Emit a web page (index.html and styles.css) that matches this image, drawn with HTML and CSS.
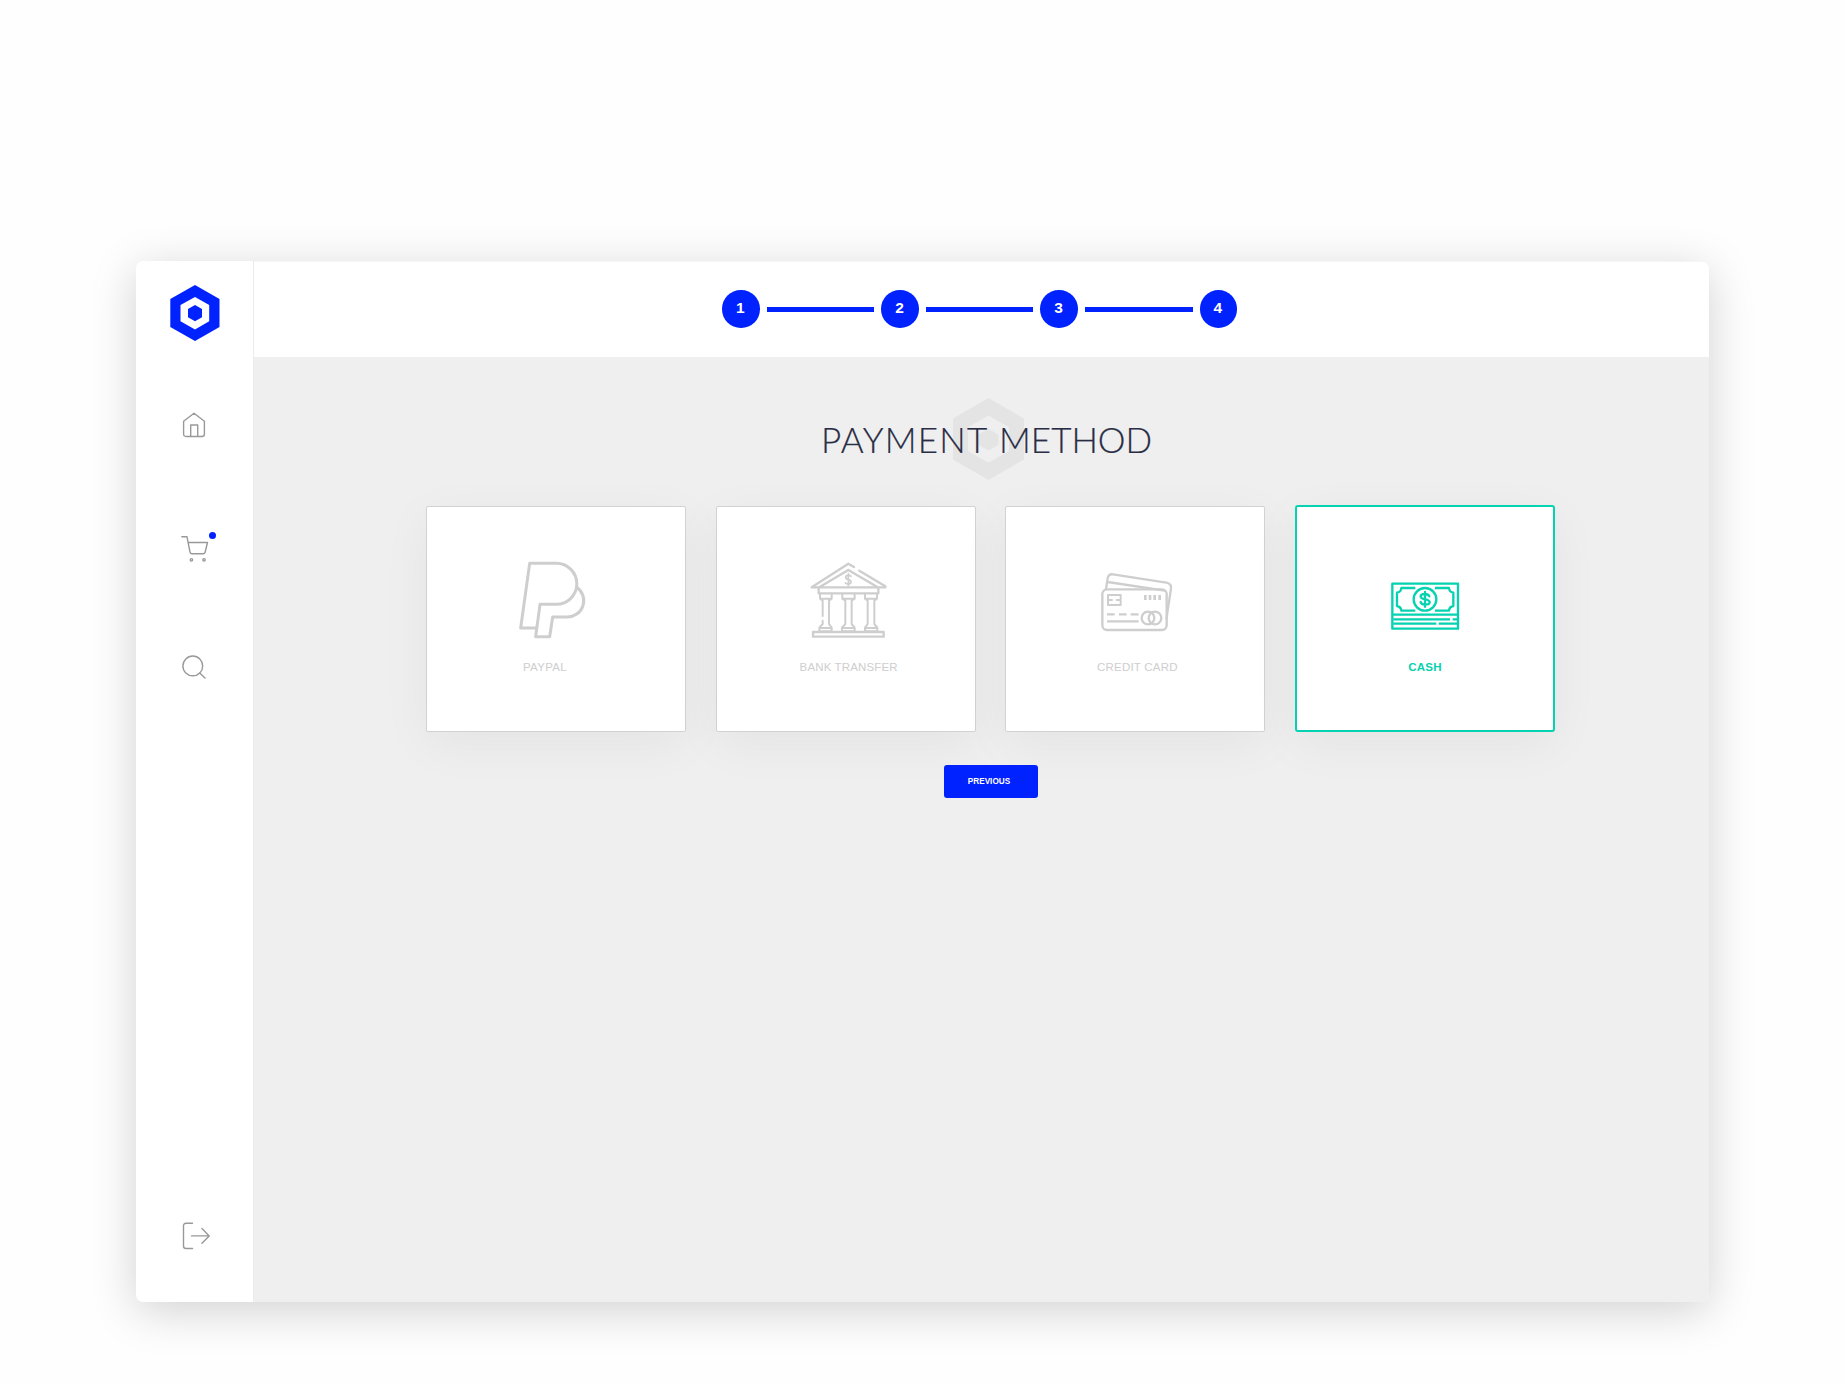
FILE: index.html
```html
<!DOCTYPE html>
<html lang="en">
<head>
<meta charset="utf-8">
<title>Payment method</title>
<link rel="stylesheet" href="styles.css">
</head>
<body>
<div class="window">
  <nav class="sidebar">
    <svg class="logo" viewBox="0 0 50 56"><path fill="#0022ff" fill-rule="evenodd" d="M25 0 49.500 14V42L25 56 .3 42V14ZM25 12 10.500 20V36.200L25 44.400 39.200 36.200V20Z"/><path fill="#0022ff" d="M25 20 32 24V32.200L25 36.200 18 32.200V24Z"/></svg>
    <svg class="nav-icon home" viewBox="0 0 24 26"><path d="M1.600 9.200 12 1.200 22.400 9.200V22Q22.400 24.500 19.900 24.500H4.100Q1.600 24.500 1.600 22ZM8.700 24.500V13H15.700V24.500"/></svg>
    <div class="cart">
      <svg class="nav-icon cart-icon" viewBox="0 0 28 27"><path d="M.8 1.800H6L9 17Q9.400 18.800 11 18.800H22Q23.800 18.800 24.200 17L26.500 7.500H7.300"/><circle cx="10.400" cy="24.800" r="1.200"/><circle cx="23" cy="24.800" r="1.200"/></svg>
      <span class="dot"></span>
    </div>
    <svg class="nav-icon search" viewBox="0 0 24 24"><circle cx="10.800" cy="10.900" r="9.900"/><path d="M17.700 18 23 23"/></svg>
    <svg class="nav-icon logout" viewBox="0 0 28 28"><path d="M10.500 1.300H4Q1.500 1.300 1.500 3.800V24Q1.500 26.500 4 26.500H10.500M9.500 13.900H27M20 6.500 27.200 13.900 20 21.300"/></svg>
  </nav>
  <div class="main">
    <header class="steps">
      <span class="step">1</span><span class="line"></span><span class="step">2</span><span class="line"></span><span class="step">3</span><span class="line"></span><span class="step">4</span>
    </header>
    <main class="content">
      <div class="heading">
        <svg class="mark" viewBox="0 0 71 82"><path fill="#e4e4e4" fill-rule="evenodd" d="M35.500 0 71 20.500V61.500L35.500 82 0 61.500V20.500ZM35.500 17.500 15 29.200V53L35.500 64.800 56 53V29.200Z"/><path fill="#e4e4e4" d="M35.500 31 45.500 36.500V47L35.500 52.500 25.500 47V36.500Z"/></svg>
        <h1><span class="wide">PAYMENT</span> <span class="tight">METHOD</span></h1>
      </div>
      <div class="cards">
        <div class="card">
          <svg class="method" viewBox="305 195 270 270"><path stroke-width="9" d="M361 220H441A61 61 0 0 1 441 343H392L379 440H421L430 381H472A49 49 0 0 0 501 291M382 414H334L361 220"/></svg>
          <span class="label paypal">PAYPAL</span>
        </div>
        <div class="card">
          <svg class="method" viewBox="62 45 270 270"><path stroke-width="7" d="M224 81 207 71 97 142H318V139L240 92M121 141 207 90 294 141M118 145V160H297V145M101 276H313V290H101Z"/>
            <path stroke-width="6" d="M122 162V176L130 182V228M130 242V252L120 263V274H157V263L149 252V182L157 176V162M122 176H157M120 264H157M189 162V176L198 182V252L188 263V274H226V263L217 252V182L226 176V162M189 176H226M188 264H226M257 162V176L265 182V252L257 263V274H294V263L285 252V182L293 176V162M257 176H293M257 264H294"/>
            <path stroke-width="5" d="M215 109Q213 106 207 106 199 106 199 112 199 117 207 119 215 121 215 126 215 132 207 132 200 132 198 129M207 101V137"/></svg>
          <span class="label bank">BANK TRANSFER</span>
        </div>
        <div class="card">
          <svg class="method" viewBox="61 15 270 270"><rect stroke-width="7" x="98" y="118" width="193" height="122" rx="14"/><path stroke-width="7" d="M109 117 114 85Q117 71 130 73L290 98Q306 101 304 116L293 188 291 206M114 96 285 122"/><path stroke-width="6" d="M115 135H153V165H115ZM117 150H127M141 150H151"/><path stroke-width="8" stroke-linecap="butt" d="M227 135V150M241 135V150M255 135V150M270 135V150"/><path stroke-width="7" stroke-linecap="butt" d="M112 193H135M148 193H171M183 193H207M112 214H207"/><circle stroke-width="7" cx="235" cy="204" r="19"/><circle stroke-width="7" cx="256" cy="204" r="19"/></svg>
          <span class="label credit">CREDIT CARD</span>
        </div>
        <div class="card selected">
          <svg class="method" viewBox="60 -15 270 270"><path stroke-width="7" d="M97 71H294V206H97ZM97 164H294"/><path stroke-width="7" stroke-linecap="butt" d="M100 178H270M278 178H292M100 191H229M236 191H292M166 84H124Q123 96 111 98V138Q123 140 124 152H166M225 84H267Q268 96 280 98V138Q268 140 267 152H225"/><circle stroke-width="7" cx="195" cy="118" r="34"/><path stroke-width="7" d="M208 109Q205 102 195 102 182 102 182 109 182 116 195 118 209 120 209 127 209 134 195 134 184 134 182 126M195 96V140"/></svg>
          <span class="label cash">CASH</span>
        </div>
      </div>
      <button class="previous">PREVIOUS</button>
    </main>
  </div>
</div>
</body>
</html>
```
FILE: styles.css
```css
* { box-sizing: border-box; }
body {
  margin: 0;
  height: 1383px;
  padding: 261px 135px 81px 136px;
  background: #fefefe;
  font-family: "Liberation Sans", Arial, sans-serif;
  overflow: hidden;
}
.window {
  display: flex;
  height: 1041px;
  border-radius: 7px;
  background: #fff;
  box-shadow: 0 9px 46px rgba(0, 0, 0, .18);
}
.sidebar {
  width: 118px;
  flex: none;
  border-right: 1px solid #ebebeb;
  display: flex;
  flex-direction: column;
  align-items: flex-start;
}
.sidebar svg { display: block; }
.logo { width: 50px; height: 56px; margin: 24px 0 0 34px; }
.nav-icon { fill: none; stroke: #999; stroke-width: 1.4; stroke-linecap: round; stroke-linejoin: round; }
.home { width: 24px; height: 26px; margin: 71px 0 0 46px; }
.cart { position: relative; margin: 97px 0 0 44.500px; }
.cart-icon { width: 28px; height: 27px; }
.dot {
  position: absolute;
  left: 28.500px;
  top: -3px;
  width: 7px;
  height: 7px;
  border-radius: 50%;
  background: #0022ff;
}
.search { width: 24px; height: 24px; margin: 92.500px 0 0 46px; }
.logout { width: 28px; height: 28px; margin: auto 0 52px 46px; }
.main { flex: 1; display: flex; flex-direction: column; }
.steps {
  height: 96px;
  display: flex;
  align-items: center;
  padding: 0 0 .5px 468px;
  border-top: 1px solid #f5f5f5;
  border-top-right-radius: 7px;
}
.step {
  width: 37.600px;
  height: 37.600px;
  border-radius: 50%;
  background: #0022ff;
  color: #fff;
  font-size: 15.500px;
  font-weight: 700;
  line-height: 36px;
  text-align: center;
  padding-right: 1px;
}
.line { width: 107.600px; height: 5.300px; margin: 0 7px; background: #0022ff; }
.content {
  flex: 1;
  background: #efefef;
  border-bottom-right-radius: 7px;
  padding: 41px 0 0 172px;
  display: flex;
  flex-direction: column;
  align-items: flex-start;
}
.heading { display: grid; width: 1129px; height: 82px; }
.heading > * { grid-area: 1 / 1; }
.mark { width: 71px; height: 82px; margin-left: 527px; }
h1 {
  margin: 0 0 0 395px;
  z-index: 1;
  color: #292d45;
  font: 300 35px/82px Lato, sans-serif;
  -webkit-text-stroke: .2px #292d45;
  white-space: nowrap;
}
.wide { letter-spacing: 1.250px; }
.tight { letter-spacing: 0; margin-left: 1px; }
.cards { display: flex; gap: 29.700px; margin-top: 26px; }
.card {
  width: 260px;
  height: 226px;
  border: 1px solid #d2d2d2;
  border-radius: 2px;
  background: #fff;
  box-shadow: 0 12px 50px rgba(0, 0, 0, .05);
  display: flex;
  flex-direction: column;
  align-items: center;
  padding-top: 48px;
  color: #cecece;
}
.card:nth-child(2) .method { margin-right: 1.500px; }
.method {
  width: 90px;
  height: 90px;
  flex: none;
  fill: none;
  stroke: currentColor;
  stroke-linecap: round;
  stroke-linejoin: round;
}
.label { margin-top: 14px; font-size: 11.500px; line-height: 16px; letter-spacing: .3px; white-space: nowrap; }
.paypal { margin-right: 22px; }
.bank { margin-left: 6px; letter-spacing: .15px; }
.credit { margin-left: 4px; letter-spacing: .2px; }
.cash { letter-spacing: .2px; }
.selected {
  height: 227px;
  margin: -1px 0 0;
  border: 2px solid #05d2b0;
  border-radius: 3px;
  color: #05d2b0;
  font-weight: 700;
}
.previous {
  width: 94px;
  height: 33px;
  margin: 33px 0 0 518px;
  padding: 1px 4px 0 0;
  border: 0;
  border-radius: 3px;
  background: #0022ff;
  color: #fff;
  font: 700 8.200px/32px "Liberation Sans", Arial, sans-serif;
}
```
